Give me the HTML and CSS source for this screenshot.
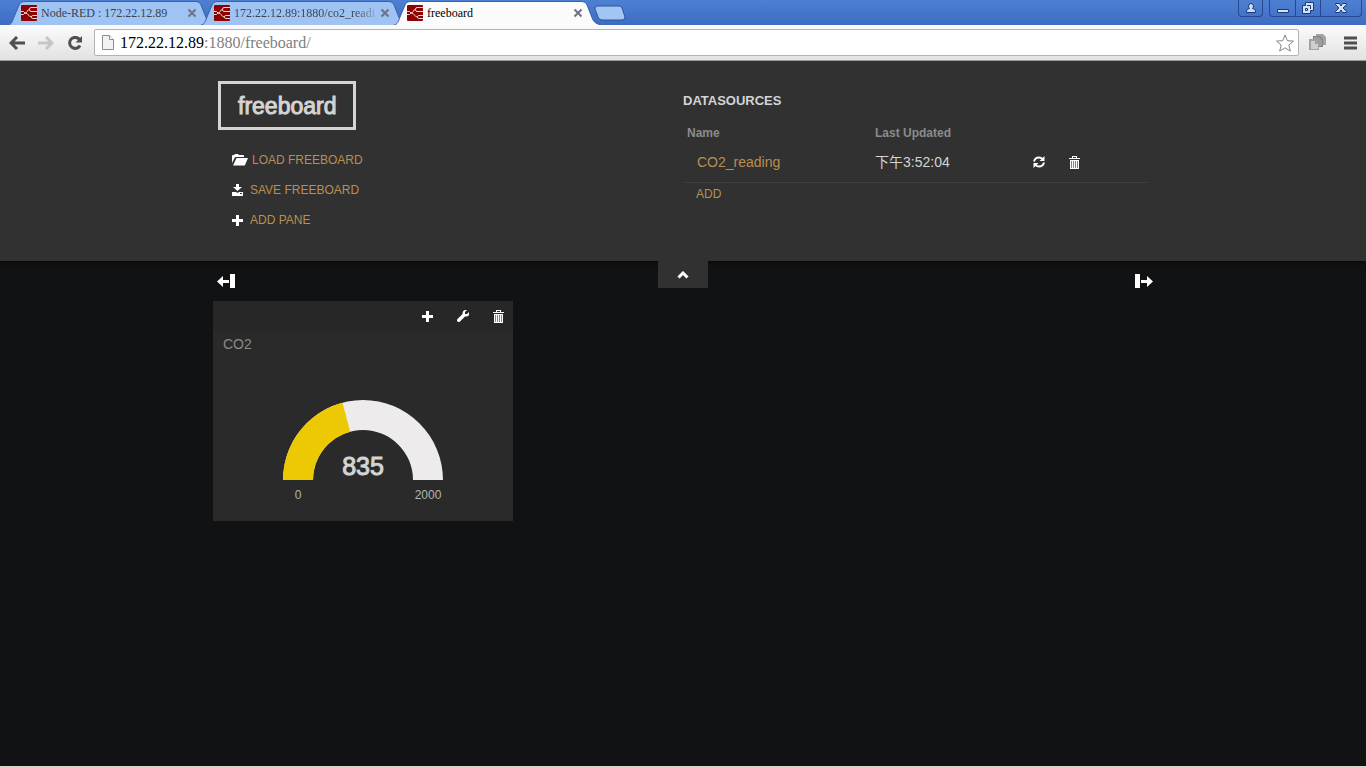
FILE: index.html
```html
<!DOCTYPE html>
<html lang="zh-Hant">
<head>
<meta charset="utf-8">
<title>freeboard</title>
<link rel="stylesheet" href="styles.css">
</head>
<body>
<svg class="sprite" aria-hidden="true">
  <symbol id="nodered" viewBox="0 0 16 16"><rect width="16" height="16" rx="1" fill="#8f0000"/><g fill="none" stroke="#ead6d6"><path d="M0 6.500h2.500L4 8 2.500 9.500H0"/><path d="M4 8C7 8 5.500 4.500 8.500 4.500M4 8C8 8 7 12 10.500 12"/><path d="M16 2.500h-6Q8.500 2.500 8.500 4.500T10 6.500h6M16 10.500h-4.500Q10.500 10.500 10.500 12t1 1.500H16"/></g></symbol>
  <symbol id="close" viewBox="0 0 10 10"><path d="M1.500 1.500l7 7m0-7l-7 7" fill="none" stroke="#6b7480" stroke-width="2"/></symbol>
  <symbol id="plus" viewBox="0 0 11 11"><path d="M4 0h3v4h4v3H7v4H4V7H0V4h4z"/></symbol>
  <symbol id="trash" viewBox="0 0 11 13"><path fill-rule="evenodd" d="M3 0h5v2h3v1H0V2h3zM4 1v1h3V1zM1 4h9v9H1z"/><path d="M2 5h1v7H2zM4 5h1v7H4zM6 5h1v7H6zM8 5h1v7H8z" fill="#858585"/></symbol>
</svg>

<header class="browser">
  <div class="tabstrip">
    <nav class="tabs">
      <div class="tab">
        <svg class="tab-shape" viewBox="0 0 209 25"><path d="M1 25C5 24 5 22 7 17L12 5Q13 1.500 17 1.500H189Q193 1.500 194 5L200 20Q202 24 208 25"/></svg>
        <svg class="favicon"><use href="#nodered"/></svg><span class="tab-title">Node-RED : 172.22.12.89</span>
        <button class="tab-close" aria-label="Close tab"><svg><use href="#close"/></svg></button>
      </div>
      <div class="tab">
        <svg class="tab-shape" viewBox="0 0 209 25"><path d="M1 25C5 24 5 22 7 17L12 5Q13 1.500 17 1.500H189Q193 1.500 194 5L200 20Q202 24 208 25"/></svg>
        <svg class="favicon"><use href="#nodered"/></svg><span class="tab-title faded">172.22.12.89:1880/co2_readi</span>
        <button class="tab-close" aria-label="Close tab"><svg><use href="#close"/></svg></button>
      </div>
      <div class="tab active">
        <svg class="tab-shape" viewBox="0 0 209 25"><path d="M1 25C5 24 5 22 7 17L12 5Q13 1.500 17 1.500H189Q193 1.500 194 5L200 20Q202 24 208 25"/></svg>
        <svg class="favicon"><use href="#nodered"/></svg><span class="tab-title">freeboard</span>
        <button class="tab-close" aria-label="Close tab"><svg><use href="#close"/></svg></button>
      </div>
      <button class="new-tab" aria-label="New tab"><svg viewBox="0 0 32 16"><path d="M3 1H25Q27 1 28 3L31 12Q31 15 28 15H8Q5 15 4 12L1 4Q1 1 3 1z" fill="#a2c5f3" stroke="#2e55a0"/></svg></button>
    </nav>
    <div class="window-controls">
      <button class="wc user" aria-label="User"><svg viewBox="0 0 12 12"><path d="M1.500 10.500V9Q1.500 7 4.500 6.500Q3.500 5.500 3.500 4Q3.500 1.500 6 1.500T8.500 4Q8.500 5.500 7.500 6.500Q10.500 7 10.500 9v1.500z" fill="#c9dcf8" stroke="#1d3a75"/></svg></button>
      <div class="wc-group">
        <button class="wc" aria-label="Minimize"><svg viewBox="0 0 12 12"><path d="M.5 7.500h11v3H.5z" fill="#d4e2f8" stroke="#1d3a75"/></svg></button>
        <button class="wc" aria-label="Restore"><svg viewBox="0 0 12 12"><path d="M3.500.5h8v8h-3v3h-8v-8h3z" fill="#d4e2f8" stroke="#1d3a75"/><path d="M3.500 6.500h2v2h-2zM5 3.500h3.500V7" fill="none" stroke="#1d3a75"/></svg></button>
        <button class="wc wide" aria-label="Close"><svg viewBox="0 0 12 12"><path d="M.5 1.500h4L6 4l1.500-2.500h4v1L8 6l3.500 3.500v1h-4L6 8l-1.500 2.500h-4v-1L4 6 .5 2.500z" fill="#d4e2f8" stroke="#1d3a75"/></svg></button>
      </div>
    </div>
  </div>
  <div class="toolbar">
    <button class="nav" aria-label="Back"><svg viewBox="0 0 16 14"><path d="M8 1L2 7l6 6M2 7h14" fill="none" stroke="#4f4f4f" stroke-width="3"/></svg></button>
    <button class="nav" aria-label="Forward"><svg viewBox="0 0 16 14"><path d="M8 1l6 6-6 6M14 7H0" fill="none" stroke="#c6c6c6" stroke-width="3"/></svg></button>
    <button class="nav" aria-label="Reload"><svg viewBox="0 0 16 14"><path d="M12.500 3.500A5.500 5.500 0 1 0 13 9.500" fill="none" stroke="#4f4f4f" stroke-width="3"/><path d="M15 0v6.500H8.500z" fill="#4f4f4f"/></svg></button>
    <div class="omnibox">
      <svg class="page-icon" viewBox="0 0 12 15"><path d="M.5.5h7l4 4v10H.5z" fill="#f2f2f2" stroke="#8d8d8d"/><path d="M7.500.5v4h4" fill="#fff" stroke="#8d8d8d"/></svg>
      <span class="url"><b>172.22.12.89</b>:1880/freeboard/</span>
      <button class="star" aria-label="Bookmark"><svg viewBox="0 0 18 18"><path d="M9 1l2.300 5.700 6.200.4-4.700 4 1.500 6L9 13.800l-5.300 3.300 1.500-6-4.700-4 6.200-.4z" fill="#fff" stroke="#858585" stroke-linejoin="round"/></svg></button>
    </div>
    <button class="tool" aria-label="Extension"><svg viewBox="0 0 17 17"><path d="M7 0h7l3 3v8H7z" fill="#a4a4a4"/><path d="M4 2h7l3 3v8H4z" fill="#828282"/><path d="M5 3h5l3 3v6H5z" fill="#9e9e9e"/><path d="M0 5h7l3 3v8H0z" fill="#a2a2a2"/><path d="M2 7h4v3h3v5H2z" fill="#cfcfcf"/></svg></button>
    <button class="tool" aria-label="Menu"><svg viewBox="0 0 17 17"><path d="M2 2.500h13v3H2zM2 7.500h13v3H2zM2 12.500h13v3H2z" fill="#4f4f4f"/></svg></button>
  </div>
</header>

<section class="admin">
  <div class="container admin-inner">
    <div class="admin-menu">
      <h1 class="logo">freeboard</h1>
      <ul class="actions">
        <li><a href="#"><svg width="16" height="12" viewBox="0 0 16 12"><path d="M0 9V2Q0 1 1 1h1l1-1h3l1 1h4q1 0 1 1v1H4Q3 3 2.500 4zM4.500 4H16L13 11Q12.800 11.500 12 11.500H1z"/></svg>LOAD FREEBOARD</a></li>
        <li><a class="tight" href="#"><svg width="11" height="12" viewBox="0 0 11 12"><path fill-rule="evenodd" d="M4 0h3v3h3L5.500 7 1 3h3zM0 8h4l1.500 1L7 8h4v4H0zM8 9v1h2V9z"/></svg>SAVE FREEBOARD</a></li>
        <li><a class="tight" href="#"><svg width="11" height="11"><use href="#plus"/></svg>ADD PANE</a></li>
      </ul>
    </div>
    <div class="datasources">
      <h2>DATASOURCES</h2>
      <table>
        <thead><tr><th class="col-name">Name</th><th class="col-time">Last Updated</th><th></th></tr></thead>
        <tbody><tr>
          <td><a href="#">CO2_reading</a></td>
          <td>下午3:52:04</td>
          <td><div class="row-tools">
            <button aria-label="Refresh"><svg width="12" height="12" viewBox="0 0 12 12"><path d="M1 5.500Q2 1.500 6 1.500q2 0 3.500 1.500M11 6.500Q10 10.500 6 10.500q-2 0-3.500-1.500" fill="none" stroke="#fff" stroke-width="2"/><path d="M11.500 0v5h-5zM.5 12V7h5z"/></svg></button>
            <button aria-label="Delete"><svg width="11" height="13"><use href="#trash"/></svg></button>
          </div></td>
        </tr></tbody>
      </table>
      <a class="add" href="#">ADD</a>
    </div>
  </div>
</section>

<main class="board">
  <div class="container board-tools">
    <button class="column-tool" aria-label="Add column left"><svg width="18" height="14" viewBox="0 0 18 14"><path d="M0 7.500L6 2v4h6v3H6v4zM13 0h5v14h-5z"/></svg></button>
    <button class="toggle" aria-label="Collapse header"><svg width="12" height="8" viewBox="0 0 12 8"><path d="M1.500 6.500L6 2l4.500 4.500" fill="none" stroke="#fff" stroke-width="3"/></svg></button>
    <button class="column-tool right" aria-label="Add column right"><svg width="18" height="14" viewBox="0 0 18 14"><path d="M18 7.500L12 2v4H6v3h6v4zM0 0h5v14H0z"/></svg></button>
  </div>
  <div class="container panes">
    <article class="pane">
      <header class="pane-tools">
        <button aria-label="Add widget"><svg width="11" height="11"><use href="#plus"/></svg></button>
        <button aria-label="Edit pane"><svg width="12" height="12" viewBox="0 0 12 12"><path d="M10 0L8 2v2h2l2-2v3q-1 2-4 1.500L3 11.500Q1.500 12.500.500 11.500-.500 10.500.500 9L5.500 4Q5.500.500 8 0z"/></svg></button>
        <button aria-label="Delete pane"><svg width="11" height="13"><use href="#trash"/></svg></button>
      </header>
      <div class="widget">
        <h3>CO2</h3>
        <svg class="gauge" viewBox="0 0 200 130">
          <path d="M20 100A80 80 0 0 1 180 100H150A50 50 0 0 0 50 100z" fill="#edebeb"/>
          <path d="M20 100A80 80 0 0 1 79.500 22.700L87.200 51.700A50 50 0 0 0 50 100z" fill="#edc904"/>
          <text class="value" x="100" y="95">835</text>
          <text class="bound" x="35" y="119">0</text>
          <text class="bound" x="165" y="119">2000</text>
        </svg>
      </div>
    </article>
  </div>
</main>
</body>
</html>
```
FILE: styles.css
```css
* { box-sizing: border-box; }
body {
  margin: 0;
  min-height: 100vh;
  display: flex;
  flex-direction: column;
  background: #111214;
  color: #d3d4d4;
  font: 12px/20px "Liberation Sans", "Noto Sans CJK TC", sans-serif;
}
button { padding: 0; border: 0; background: none; display: flex; align-items: center; justify-content: center; }
svg { display: block; fill: #fff; flex: none; }
a { color: #b88f51; text-decoration: none; }
.sprite { position: absolute; width: 0; height: 0; }

/* Browser chrome */
.browser { position: relative; z-index: 1; font-family: "Liberation Serif", serif; }
.tabstrip { display: flex; justify-content: space-between; height: 25px; background: linear-gradient(#4d80d2, #3e6cc4); }
.tabs { display: flex; padding-left: 7px; }
.tab { position: relative; display: flex; align-items: center; width: 193px; height: 25px; padding: 0 3px 0 14px; gap: 4px; color: #39424f; }
.tab > * { position: relative; }
.tab .tab-shape { position: absolute; left: 0; top: 0; width: 209px; height: 25px; fill: #9fc3f3; stroke: #3a60a8; }
.tab.active { z-index: 1; color: #000; }
.tab.active .tab-shape { fill: #fbfbfb; }
.favicon { width: 16px; height: 16px; }
.tab-title { flex: 1; min-width: 0; white-space: nowrap; line-height: 16px; }
.faded { color: transparent; background: linear-gradient(90deg, #39424f 85%, #8aabd8); -webkit-background-clip: text; background-clip: text; }
.tab-close, .tab-close svg { width: 10px; height: 10px; }
.new-tab { margin: 5px 0 0 8px; height: 16px; }
.new-tab svg { width: 32px; height: 16px; }
.window-controls { display: flex; gap: 6px; padding-right: 4px; height: 17px; }
.wc-group { display: flex; border: 1px solid #25498f; border-top: 0; border-radius: 0 0 4px 4px; }
.wc { width: 25px; }
.wc.user { border: 1px solid #25498f; border-top: 0; border-radius: 0 0 4px 4px; }
.wc + .wc { border-left: 1px solid #25498f; }
.wc.wide { width: 41px; }
.wc svg { width: 12px; height: 12px; }
.toolbar { display: flex; align-items: center; height: 36px; padding: 0 7px 0 9px; background: linear-gradient(#fbfbfb, #e2e2e2); border-bottom: 1px solid #999; }
.nav { width: 16px; margin-right: 13px; }
.nav svg { width: 16px; height: 14px; }
.omnibox { flex: 1; display: flex; align-items: center; height: 27px; margin-right: 10px; padding: 0 4px 0 7px; border: 1px solid #b4b4b4; border-radius: 2px; background: #fff; }
.nav + .omnibox { margin-left: -2px; }
.page-icon { width: 12px; height: 15px; margin-right: 6px; }
.url { flex: 1; font-size: 16px; color: #808080; }
.url b { font-weight: 400; color: #000; }
.star svg { width: 18px; height: 18px; }
.tool + .tool { margin-left: 16px; }
.tool svg { width: 17px; height: 17px; }

/* Admin bar */
.container { width: 100%; max-width: 940px; margin: 0 auto; }
.admin { position: relative; background: #313131; box-shadow: 0 0 5px #000; }
.admin-inner { display: grid; grid-template-columns: 1fr 1fr; min-height: 200px; padding-top: 20px; }
.admin-menu { padding-left: 5px; }
.logo { width: max-content; margin: 0; padding: 7px 17px 6px; border: 3px solid #d3d4d4; font-size: 23px; font-weight: 400; line-height: 30px; -webkit-text-stroke: 1px #d3d4d4; }
.actions { list-style: none; margin: 15px 0 0; padding: 0 0 0 14px; }
.actions li { height: 30px; display: flex; align-items: center; }
.actions a { display: flex; align-items: center; gap: 4px; }
.actions .tight { gap: 7px; }
.datasources { padding: 10px 5px 0 0; }
h2 { margin: 0; font-size: 13px; line-height: 20px; }
table { width: 100%; table-layout: fixed; border-collapse: collapse; border-bottom: 1px solid #3d3d3d; }
th { height: 41px; padding: 2px 4px 0; text-align: left; color: #8b8b8b; font-size: 12px; line-height: 30px; }
td { padding: 0 4px 10px; font-size: 14px; line-height: 20px; }
td:first-child { padding-left: 14px; }
.col-name, .col-time { width: 188px; }
.row-tools { display: flex; align-items: center; justify-content: flex-end; gap: 24px; height: 20px; margin-left: -60px; padding-right: 64px; }
.add { display: inline-block; margin: 1px 0 0 13px; }

/* Board */
.board { flex: 1; border-bottom: 2px solid #d8d4c4; }
.board-tools { position: relative; z-index: 1; display: grid; grid-template-columns: 1fr 50px 1fr; align-items: start; height: 40px; }
.column-tool { justify-self: start; padding: 13px 0 0 4px; }
.column-tool.right { justify-self: end; padding-left: 0; }
.toggle { height: 27px; background: #313131; }
.panes { display: flex; }
.pane { width: 300px; background: #2a2a2a; }
.pane-tools { display: flex; align-items: center; justify-content: flex-end; gap: 24px; height: 30px; padding-right: 9px; background: #272727; }
.widget { display: flex; flex-direction: column; align-items: center; height: 190px; }
h3 { align-self: stretch; margin: 3px 10px 26px; font-size: 14px; font-weight: 400; line-height: 20px; color: #8b8b8b; }
.gauge { width: 200px; height: 130px; text-anchor: middle; }
.value { font-size: 25px; fill: #d3d4d4; stroke: #d3d4d4; stroke-width: 1px; }
.bound { font-size: 12px; fill: #b3b3b3; }
```
